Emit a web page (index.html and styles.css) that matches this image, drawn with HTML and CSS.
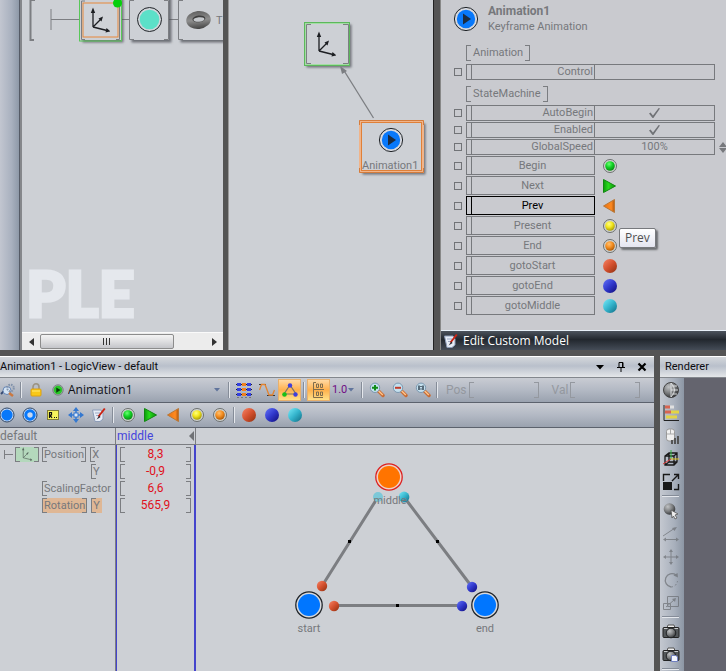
FILE: index.html
```html
<!DOCTYPE html>
<html lang="en">
<head>
<meta charset="utf-8">
<title>Animation1 - LogicView</title>
<link rel="stylesheet" href="styles.css">
</head>
<body>
<svg class="defs" aria-hidden="true">
  <defs>
    <radialGradient id="gGreen" cx=".4" cy=".3" r=".7"><stop offset="0" stop-color="#6bff72"/><stop offset=".5" stop-color="#12d325"/><stop offset="1" stop-color="#0a8a14"/></radialGradient>
    <radialGradient id="gYellow" cx=".4" cy=".3" r=".7"><stop offset="0" stop-color="#ffff80"/><stop offset=".5" stop-color="#f2e61c"/><stop offset="1" stop-color="#a89c0c"/></radialGradient>
    <radialGradient id="gOrange" cx=".4" cy=".3" r=".7"><stop offset="0" stop-color="#ffc070"/><stop offset=".5" stop-color="#f59023"/><stop offset="1" stop-color="#b05c08"/></radialGradient>
    <linearGradient id="gRed" x2="1" y2="1"><stop offset="0.1" stop-color="#f07a5c"/><stop offset=".5" stop-color="#d4502e"/><stop offset="1" stop-color="#8c3010"/></linearGradient>
    <linearGradient id="gBlue" x2="1" y2="1"><stop offset="0.1" stop-color="#5a68f0"/><stop offset=".5" stop-color="#3038cc"/><stop offset="1" stop-color="#100c78"/></linearGradient>
    <linearGradient id="gCyan" x2="1" y2="1"><stop offset="0.1" stop-color="#6ce0f0"/><stop offset=".5" stop-color="#34b4cc"/><stop offset="1" stop-color="#106c84"/></linearGradient>
    <radialGradient id="gGrey" cx=".35" cy=".3" r=".8"><stop offset="0" stop-color="#c0c2c4"/><stop offset=".5" stop-color="#7c7e80"/><stop offset="1" stop-color="#242628"/></radialGradient>
    <linearGradient id="gNext" x2="1"><stop offset="0" stop-color="#0d9a0d"/><stop offset=".4" stop-color="#28dc1c"/><stop offset="1" stop-color="#0a8e0a"/></linearGradient>
    <linearGradient id="gPrev" x2="1"><stop offset="0" stop-color="#e87010"/><stop offset=".7" stop-color="#ff8a20"/><stop offset="1" stop-color="#b05810"/></linearGradient>
    <linearGradient id="gTorus" x2="0" y2="1"><stop offset="0" stop-color="#606060"/><stop offset=".5" stop-color="#8e8e8e"/><stop offset="1" stop-color="#444"/></linearGradient>
    <filter id="shadow" x="-20%" y="-20%" width="150%" height="150%"><feDropShadow dx="2.5" dy="2.5" stdDeviation="1.2" flood-color="#505358" flood-opacity=".75"/></filter>

    <symbol id="ring-green" viewBox="0 0 16 16"><circle cx="8" cy="8" r="6.5" fill="#d0d3d0" stroke="#6c7070"/><circle cx="8" cy="8" r="4.8" fill="url(#gGreen)"/></symbol>
    <symbol id="ring-yellow" viewBox="0 0 16 16"><circle cx="8" cy="8" r="6.5" fill="#d0d3d0" stroke="#6c7070"/><circle cx="8" cy="8" r="4.8" fill="url(#gYellow)"/></symbol>
    <symbol id="ring-orange" viewBox="0 0 16 16"><circle cx="8" cy="8" r="6.5" fill="#d0d3d0" stroke="#6c7070"/><circle cx="8" cy="8" r="4.8" fill="url(#gOrange)"/></symbol>
    <symbol id="ball-red" viewBox="0 0 16 16"><circle cx="8" cy="8" r="7" fill="url(#gRed)"/></symbol>
    <symbol id="ball-blue" viewBox="0 0 16 16"><circle cx="8" cy="8" r="7" fill="url(#gBlue)"/></symbol>
    <symbol id="ball-cyan" viewBox="0 0 16 16"><circle cx="8" cy="8" r="7" fill="url(#gCyan)"/></symbol>
    <symbol id="next" viewBox="0 0 16 16"><path d="M1.5 1.5L13.5 8L1.5 14.5Z" fill="url(#gNext)" stroke="#108810"/></symbol>
    <symbol id="prev" viewBox="0 0 16 16"><path d="M12.5 1.5V14.5L1.5 8Z" fill="url(#gPrev)" stroke="#b87838"/></symbol>
    <symbol id="play-blue" viewBox="0 0 26 26"><circle cx="13" cy="13" r="11.6" fill="#d6d8de" stroke="#202428"/><circle cx="13" cy="13" r="9.2" fill="#0878fa"/><path d="M10 7.5L18 13L10 18.5Z" fill="#1c2c40"/></symbol>
    <symbol id="axes" viewBox="0 0 20 26"><path d="M3 20V4M3 20L11 12M3 20L17 23.5" fill="none" stroke="#1c1e22" stroke-width="1.3"/><path d="M3 0.5L5.2 6H.8ZM13 9.5L11.5 14.5L8.5 11.5ZM20.5 24.5L15.5 25.5L16.5 21Z" fill="#1c1e22"/></symbol>
    <symbol id="edit" viewBox="0 0 16 16"><path d="M1.5 3H10L12 6V12L9 14.5H4Z" fill="#e6ecf6" stroke="#8c9cb8"/><path d="M4 6H9M5 8.5H9" stroke="#9aa8c4"/><path d="M13.8 1.5L7.5 9.5" stroke="#cc2414" stroke-width="2"/><path d="M8.2 8.6L5.6 12.6L9.6 10Z" fill="#2c2830"/></symbol>
    <symbol id="lens" viewBox="0 0 16 16"><path d="M9.5 9L14 13.5" stroke="#c86c34" stroke-width="3.4" stroke-linecap="round"/><path d="M9.5 8.8L13.8 13" stroke="#ffc68c" stroke-width="1.4"/><circle cx="6" cy="5.8" r="4.7" fill="#c4e0ee" stroke="#7c98b0"/></symbol>
    <symbol id="camera" viewBox="0 0 18 16"><path d="M6 1H12L13 4H5Z" fill="#eee" stroke="#555"/><rect x="1" y="3.5" width="16" height="10" rx="1" fill="#53575a" stroke="#222"/><path d="M2 4.5H5.5M12.5 4.5H16" stroke="#c8cacc"/><circle cx="9" cy="9" r="4.8" fill="url(#gGrey)" stroke="#202224"/></symbol>
  </defs>
</svg>

<main class="app">
  <section class="workspace">
    <div class="rail"></div>

    <section class="pane scene" aria-label="Scene">
      <svg class="canvas" width="201" height="300" role="img" aria-label="Scene chain">
        <path d="M13 0H8.500V40H12" fill="none" stroke="#7c7e82" stroke-width="2"/>
        <path d="M29 9V30M29 19.500H170" fill="none" stroke="#7c7e82"/>
        <g filter="url(#shadow)"><rect x="58" y="-6" width="41" height="46" fill="#cdd0d5"/><rect x="107" y="-6" width="40" height="46" fill="#cdd0d5"/><rect x="156" y="-6" width="60" height="46" fill="#cdd0d5"/></g>
        <rect x="57.500" y="-6" width="42" height="47" fill="none" stroke="#58c858"/>
        <path d="M63 1H59.500V39.500H63M94 1H97.500V39.500H94M112 .5H107.500V39.500H112M142 .5H146.500V39.500H142M161 .5H156.500V39.500H161" fill="none" stroke="#7c7e82"/>
        <rect x="61" y="3" width="35" height="34" fill="#cfd2d7" stroke="#e8873a"/>
        <use href="#axes" x="68" y="7" width="20" height="26"/>
        <circle cx="95.500" cy="3" r="4.500" fill="#06ce0c"/>
        <circle cx="127.500" cy="19.500" r="12" fill="#d2d5da" stroke="#202428"/>
        <circle cx="127.500" cy="19.500" r="9.800" fill="#5ce0c8"/>
        <g transform="rotate(-6 176 20)"><ellipse cx="176.500" cy="20" rx="12.300" ry="9" fill="url(#gTorus)"/><ellipse cx="177" cy="19" rx="6.500" ry="3.300" fill="#3e3e3e"/><ellipse cx="177" cy="19.600" rx="5.500" ry="2.300" fill="#c4c7cb"/></g>
        <text class="node-text" x="194" y="24">T</text>
      </svg>
      <div class="watermark">PLE</div>
      <div class="scrollbar">
        <button class="arrow" type="button" aria-label="Scroll left"><svg width="5" height="8"><path d="M5 0V8L0 4Z" fill="#333"/></svg></button>
        <div class="track"><div class="thumb"><i></i><i></i><i></i></div></div>
        <button class="arrow" type="button" aria-label="Scroll right"><svg width="5" height="8"><path d="M0 0V8L5 4Z" fill="#333"/></svg></button>
      </div>
    </section>

    <section class="pane graph" aria-label="Graph">
      <svg class="canvas" width="204" height="300" role="img" aria-label="Node graph">
        <g filter="url(#shadow)"><rect x="75" y="22" width="45" height="43" fill="#cdd0d5"/><rect x="131" y="121" width="63" height="51" fill="#cdd0d5"/></g>
        <rect x="76" y="23" width="44" height="42" fill="none" stroke="#a4dca4" stroke-width="2"/>
        <rect x="75.500" y="22.500" width="45" height="43" fill="none" stroke="#5cb85c"/>
        <path d="M82 24.500H77.500V63.500H82M114 24.500H119.500V63.500H114" fill="none" stroke="#7c7e82"/>
        <use href="#axes" x="87" y="31" width="20" height="26"/>
        <path d="M144.500 118L114 69" stroke="#7c7e82" stroke-width="1.300"/>
        <path d="M111 66L118 71L113 74Z" fill="#7c7e82"/>
        <rect x="131.500" y="121.500" width="62" height="50" fill="none" stroke="#f0b48a" stroke-width="3"/>
        <rect x="132.500" y="122.500" width="60" height="48" fill="none" stroke="#e08038"/>
        <path d="M130.500 125V120.500H194.500V125M130.500 168V172.500H194.500V168" fill="none" stroke="#d47c3c"/>
        <use href="#play-blue" x="149" y="127" width="26" height="26"/>
        <text class="node-text" x="133" y="169">Animation1</text>
      </svg>
    </section>

    <section class="inspector" aria-label="Properties">
      <header class="subject">
        <svg width="26" height="26"><use href="#play-blue"/></svg>
        <div><h1>Animation1</h1><p>Keyframe Animation</p></div>
      </header>
      <h2 class="group"><span class="bracket">Animation</span></h2>
      <div class="row"><input class="pick" type="checkbox" aria-label="Expose Control"><div class="field"><label for="control">Control</label><input class="value" id="control" type="text"></div></div>
      <h2 class="group"><span class="bracket">StateMachine</span></h2>
      <div class="row"><input class="pick" type="checkbox" aria-label="Expose AutoBegin"><div class="field"><label for="auto">AutoBegin</label><span class="value"><input class="tick" id="auto" type="checkbox" checked></span></div></div>
      <div class="row"><input class="pick" type="checkbox" aria-label="Expose Enabled"><div class="field"><label for="enabled">Enabled</label><span class="value"><input class="tick" id="enabled" type="checkbox" checked></span></div></div>
      <div class="row speed"><input class="pick" type="checkbox" aria-label="Expose GlobalSpeed"><div class="field"><label for="speed">GlobalSpeed</label><input class="value" id="speed" type="text" value="100%"></div>
        <svg class="spin" width="8" height="11"><path d="M4 0L8 5H0ZM0 6H8L4 11Z" fill="#77797d"/></svg></div>
      <div class="actions">
        <div class="row"><input class="pick" type="checkbox" aria-label="Expose Begin"><button type="button" class="action">Begin</button><svg width="16" height="16"><use href="#ring-green"/></svg></div>
        <div class="row"><input class="pick" type="checkbox" aria-label="Expose Next"><button type="button" class="action">Next</button><svg width="16" height="16"><use href="#next"/></svg></div>
        <div class="row"><input class="pick" type="checkbox" aria-label="Expose Prev"><button type="button" class="action active">Prev</button><svg width="16" height="16"><use href="#prev"/></svg></div>
        <div class="row"><input class="pick" type="checkbox" aria-label="Expose Present"><button type="button" class="action">Present</button><svg width="16" height="16"><use href="#ring-yellow"/></svg><span class="tooltip" role="tooltip">Prev</span></div>
        <div class="row"><input class="pick" type="checkbox" aria-label="Expose End"><button type="button" class="action">End</button><svg width="16" height="16"><use href="#ring-orange"/></svg></div>
        <div class="row"><input class="pick" type="checkbox" aria-label="Expose gotoStart"><button type="button" class="action">gotoStart</button><svg width="16" height="16"><use href="#ball-red"/></svg></div>
        <div class="row"><input class="pick" type="checkbox" aria-label="Expose gotoEnd"><button type="button" class="action">gotoEnd</button><svg width="16" height="16"><use href="#ball-blue"/></svg></div>
        <div class="row"><input class="pick" type="checkbox" aria-label="Expose gotoMiddle"><button type="button" class="action">gotoMiddle</button><svg width="16" height="16"><use href="#ball-cyan"/></svg></div>
      </div>
      <button class="custom" type="button"><svg width="16" height="16"><use href="#edit"/></svg>Edit Custom Model</button>
    </section>
  </section>

  <section class="lower">
    <section class="logic" aria-label="LogicView">
      <header class="title"><h2>Animation1 - LogicView - default</h2>
        <button type="button" aria-label="Window menu"><svg width="10" height="10"><path d="M1 3H9L5 7.500Z"/></svg></button>
        <button type="button" aria-label="Pin"><svg width="10" height="10"><path d="M3 .5H7V5.500H3ZM1 5.500H9M5 6V10M6.500 1V5" fill="none" stroke="#000"/></svg></button>
        <button type="button" aria-label="Close"><svg width="10" height="10"><path d="M1.500 1.500L8.500 8.500M8.500 1.500L1.500 8.500" stroke="#000" stroke-width="2.200"/></svg></button>
      </header>

      <div class="toolbar">
        <button type="button" class="tool" aria-label="Settings"><svg width="16" height="16"><path d="M2 12L7 7" stroke="#384c74" stroke-width="2"/><circle cx="8" cy="8.500" r="4" fill="#d4e4f4" stroke="#6484b4"/><circle cx="11.500" cy="6" r="3.300" fill="none" stroke="#8494ac" stroke-width="2" stroke-dasharray="1.600 1"/><path d="M10 11L14 14" stroke="#ca7840" stroke-width="2.400"/></svg></button>
        <i class="sep"></i>
        <button type="button" class="tool" aria-label="Lock"><svg width="16" height="16"><path d="M5 8V5a3 3.300 0 0 1 6 0V8" fill="none" stroke="#9c9484" stroke-width="1.600"/><rect x="3" y="7" width="10" height="7" rx="1" fill="#f8c818" stroke="#dca010"/><path d="M4 9H12" stroke="#ffea70"/></svg></button>
        <label class="machine"><svg width="14" height="14" viewBox="0 0 16 16"><circle cx="8" cy="8" r="6" fill="#9ca4a4" stroke="#788080"/><circle cx="8" cy="8" r="4.800" fill="#28c828"/><path d="M6 5L11 8L6 11Z" fill="#063c06"/></svg>
          <select aria-label="State machine"><option>Animation1</option></select><svg width="6" height="4"><path d="M0 0H6L3 3.500Z" fill="#60749c"/></svg></label>
        <i class="sep"></i>
        <button type="button" class="tool" aria-label="Keys"><svg width="16" height="16"><path d="M0 2.500H16M0 7.500H16M0 12.500H16" stroke="#222"/><path d="M1 1H5V4H1ZM1 6H5V9H1ZM1 11H5V14H1ZM11 1H15V4H11ZM11 6H15V9H11ZM11 11H15V14H11Z" fill="#3440e0"/><path d="M6 1H10V4H6ZM6 6H10V9H6ZM6 11H10V14H6Z" fill="#f08020"/><path d="M1 15.500H15" stroke="#777" stroke-dasharray="2 2"/></svg></button>
        <button type="button" class="tool" aria-label="Curves"><svg width="16" height="16"><path d="M0 2.500H7M8 13.500H16" stroke="#333"/><path d="M.5 8L2.500 2.500H6L10 13H13.500L15.500 8" fill="none" stroke="#e48430" stroke-width="1.300"/></svg></button>
        <button type="button" class="tool on" aria-label="States"><svg width="16" height="16"><path d="M8 3L2 12H14Z" fill="none" stroke="#7c7464" stroke-width="1.200"/><circle cx="8" cy="3.500" r="2.200" fill="#4040dc"/><circle cx="2.500" cy="12.500" r="2.300" fill="#18c018"/><circle cx="13.500" cy="12.500" r="2.200" fill="#4040dc"/></svg></button>
        <i class="sep"></i>
        <button type="button" class="tool on" aria-label="Values"><svg width="16" height="16"><path d="M5 .5H2.500V15.500H12M2.500 7.500H13" fill="none" stroke="#806c4c"/><path d="M5.500 2H7.500V5.500H5.500ZM9.500 2H11.500V5.500H9.500ZM5.500 10H7.500V13.500H5.500ZM9.500 10H11.500V13.500H9.500Z" fill="none" stroke="#806c4c"/></svg></button>
        <label class="rate"><select aria-label="Playback rate"><option>1.0</option></select><svg width="6" height="4"><path d="M0 0H6L3 3.500Z" fill="#60749c"/></svg></label>
        <i class="sep"></i>
        <button type="button" class="tool" aria-label="Zoom in"><svg width="16" height="16"><use href="#lens"/><path d="M3 5.800H9M6 3V8.600" stroke="#108c18" stroke-width="2"/></svg></button>
        <button type="button" class="tool" aria-label="Zoom out"><svg width="16" height="16"><use href="#lens"/><path d="M3 5.800H9" stroke="#c03c2c" stroke-width="2"/></svg></button>
        <button type="button" class="tool" aria-label="Actual size"><svg width="16" height="16"><use href="#lens"/><path d="M4 3.500V8M8 3.500V8M6 4V5M6 6.500V7.500" stroke="#203040" stroke-width="1.300"/></svg></button>
        <i class="sep"></i>
        <div class="coord"><label for="pos">Pos</label><span class="bracket"><input id="pos" type="text" disabled></span></div>
        <div class="coord"><label for="val">Val</label><span class="bracket"><input id="val" type="text" disabled></span></div>
      </div>

      <div class="toolbar">
        <button type="button" class="tool" aria-label="Add state"><svg width="16" height="16"><circle cx="8" cy="8" r="7" fill="#c8d8f0" stroke="#304868"/><circle cx="8" cy="8" r="5.600" fill="#0878fa"/></svg></button>
        <button type="button" class="tool" aria-label="Add loop state"><svg width="16" height="16"><circle cx="8" cy="8" r="7" fill="#c8d8f0" stroke="#304868"/><circle cx="8" cy="8" r="4.200" fill="none" stroke="#0878fa" stroke-width="3"/></svg></button>
        <button type="button" class="tool" aria-label="Rename"><svg width="16" height="16"><rect x="2.500" y="3.500" width="11" height="9" fill="#f6f45c" stroke="#807c38"/><path d="M4.500 11V5.500H6.500V8H4.500M5 8L7 11M9 10.500H10M11 10.500H12" fill="none" stroke="#111" stroke-width="1.200"/></svg></button>
        <button type="button" class="tool" aria-label="Move"><svg width="16" height="16"><path d="M8 0L11 4H5ZM8 16L11 12H5ZM0 8L4 5V11ZM16 8L12 5V11Z" fill="#3478d0"/><path d="M8 3V13M3 8H13" stroke="#3478d0" stroke-width="1.500"/><rect x="6" y="6" width="4" height="4" fill="#dce8f8" stroke="#3478d0"/></svg></button>
        <button type="button" class="tool" aria-label="Edit"><svg width="16" height="16"><use href="#edit"/></svg></button>
        <i class="sep"></i>
        <button type="button" class="tool" aria-label="Begin"><svg width="16" height="16"><use href="#ring-green"/></svg></button>
        <button type="button" class="tool" aria-label="Next"><svg width="16" height="16"><use href="#next"/></svg></button>
        <button type="button" class="tool" aria-label="Prev"><svg width="16" height="16"><use href="#prev"/></svg></button>
        <button type="button" class="tool" aria-label="Present"><svg width="16" height="16"><use href="#ring-yellow"/></svg></button>
        <button type="button" class="tool" aria-label="End"><svg width="16" height="16"><use href="#ring-orange"/></svg></button>
        <i class="sep"></i>
        <button type="button" class="tool" aria-label="gotoStart"><svg width="16" height="16"><use href="#ball-red"/></svg></button>
        <button type="button" class="tool" aria-label="gotoEnd"><svg width="16" height="16"><use href="#ball-blue"/></svg></button>
        <button type="button" class="tool" aria-label="gotoMiddle"><svg width="16" height="16"><use href="#ball-cyan"/></svg></button>
      </div>

      <div class="states">
        <table class="keys">
          <thead><tr><th scope="col">default</th><th scope="col" class="current"><div>middle<svg width="5" height="10"><path d="M5 0V10L0 5Z" fill="#707276"/></svg></div></th></tr></thead>
          <tbody>
            <tr><th scope="row"><div class="param"><span class="tree"><svg width="9" height="9"><path d="M.5 0V9M0 4.500H9" stroke="#7c7e82"/></svg><span class="bracket target"><svg width="14" height="14" viewBox="0 0 20 26"><use href="#axes" opacity=".6"/></svg></span></span><span class="bracket name">Position</span><span class="bracket open">X</span></div></th><td><div class="bracket">8,3</div></td></tr>
            <tr><th scope="row"><div class="param second"><span class="bracket open">Y</span></div></th><td><div class="bracket">-0,9</div></td></tr>
            <tr><th scope="row"><div class="param"><span class="tree"></span><span class="bracket open">ScalingFactor</span></div></th><td><div class="bracket">6,6</div></td></tr>
            <tr><th scope="row"><div class="param"><span class="tree"></span><span class="bracket name hot">Rotation</span><span class="bracket open hot">Y</span></div></th><td><div class="bracket">565,9</div></td></tr>
            <tr class="fill"><th></th><td></td></tr>
          </tbody>
        </table>
        <div class="machine-view">
          <div class="ruler"></div>
          <svg class="diagram" width="457" height="226" role="img" aria-label="State transitions">
            <path d="M126 141L182 52M208 52L276 142M138 160.500H266" fill="none" stroke="#7c7e82" stroke-width="3"/>
            <path d="M152 95h3v3h-3zM240 95h3v3h-3zM200 159h3v3h-3z"/>
            <circle cx="193" cy="32" r="13.200" fill="#eed0c8" stroke="#dc2020" stroke-width="1.300"/><circle cx="193" cy="32" r="11" fill="#ff7400"/>
            <circle cx="113" cy="160" r="13.200" fill="#d6d9de" stroke="#202428" stroke-width="1.300"/><circle cx="113" cy="160" r="11" fill="#0076ff"/>
            <circle cx="289" cy="160" r="13.200" fill="#d6d9de" stroke="#202428" stroke-width="1.300"/><circle cx="289" cy="160" r="11" fill="#0076ff"/>
            <circle cx="182" cy="52" r="5" fill="#7cc8d8"/><circle cx="208" cy="52" r="5.400" fill="url(#gCyan)"/>
            <circle cx="126" cy="141" r="5.200" fill="url(#gRed)"/><circle cx="138" cy="161" r="5.200" fill="url(#gRed)"/>
            <circle cx="276" cy="142" r="5.200" fill="url(#gBlue)"/><circle cx="266" cy="161" r="5.200" fill="url(#gBlue)"/>
            <g class="node-text" text-anchor="middle"><text x="194" y="59">middle</text><text x="113" y="187">start</text><text x="289" y="187">end</text></g>
          </svg>
        </div>
      </div>
    </section>

    <section class="renderer" aria-label="Renderer">
      <header class="title"><h2>Renderer</h2></header>
      <div class="view">
        <div class="side">
          <button type="button" aria-label="World"><svg width="18" height="18"><circle cx="9" cy="9" r="7.500" fill="url(#gGrey)" stroke="#444"/><path d="M9 2V16M9 9H16M10 5H15M10 13H15M9 2Q16 9 9 16" fill="none" stroke="#e4e6e8" stroke-width=".9"/></svg></button>
          <button type="button" aria-label="Statistics"><svg width="18" height="18"><path d="M2 1V16.500H17" fill="none" stroke="#222"/><path d="M3 3H8M3 8H9" stroke="#d86450" stroke-width="3"/><path d="M8 3H12" stroke="#e0e0e0" stroke-width="3"/><path d="M9 8H17M4 13H15" stroke="#e4d444" stroke-width="3"/></svg></button>
          <button type="button" aria-label="Mouse"><svg width="18" height="18"><rect x="4.500" y="2" width="8" height="12" rx="2.500" fill="#f0f0f0" stroke="#999"/><path d="M5 7H12M8.500 2V7" stroke="#aaa"/><path d="M9 13H11V17H9ZM12 11H14V17H12ZM15 9H17V17H15Z" fill="#555"/></svg></button>
          <button type="button" aria-label="Bounds"><svg width="18" height="18"><path d="M3 6L7 3H15V12L12 15H3ZM3 6H12V15M12 6L15 3M7 3V12L3 15M7 12H15" fill="none" stroke="#181818" stroke-width="1.300"/><path d="M9 9V0" stroke="#30b840"/><path d="M9 9L1 14" stroke="#e03838"/><path d="M9 9H17" stroke="#e4c820"/></svg></button>
          <button type="button" aria-label="Resize view"><svg width="18" height="18"><path d="M1.500 8V1.500H8M16.500 11V16.500H12M12 1.500H16.500V6M10 8L16 2" fill="none" stroke="#181818" stroke-width="1.400"/><rect x="1" y="9" width="9" height="8" fill="#181818"/></svg></button>
          <i></i>
          <button type="button" aria-label="Pick"><svg width="18" height="18"><circle cx="7.500" cy="7" r="5.800" fill="url(#gGrey)"/><path d="M9 8L16 12L13 13L15 16L13 17L11.500 14L10 16Z" fill="#eee" stroke="#555" stroke-width=".8"/></svg></button>
          <button type="button" class="off" aria-label="Select axis"><svg width="18" height="18"><path d="M1 11L13 3M2 14.500H16" stroke="#66696d"/><path d="M15 2L12.500 6L10 3ZM17 14.500L14 12.500V16.500ZM1 14.500L4 12.500V16.500Z" fill="#66696d"/></svg></button>
          <button type="button" class="off" aria-label="Translate"><svg width="18" height="18"><path d="M9 3V15M3 9H15" stroke="#66696d"/><path d="M9 1L11 4H7ZM9 17L11 14H7ZM1 9L4 7V11ZM17 9L14 7V11Z" fill="#66696d"/></svg></button>
          <button type="button" class="off" aria-label="Rotate"><svg width="18" height="18"><path d="M14 4A6.700 6.700 0 1 0 9 16" fill="none" stroke="#66696d" stroke-width="1.300"/><path d="M9 16A6.700 6.700 0 0 0 15.500 10" fill="none" stroke="#66696d" stroke-dasharray="2 2"/><path d="M16 6.500L15.500 2L11.500 4.500Z" fill="#66696d"/></svg></button>
          <button type="button" class="off" aria-label="Scale"><svg width="18" height="18"><path d="M5.500 2.500H16.500V12.500H5.500ZM1.500 9.500H8.500V15.500H1.500ZM4 13L12 6" fill="none" stroke="#66696d"/><path d="M14 4L13 8L10 5Z" fill="#66696d"/></svg></button>
          <i></i>
          <button type="button" aria-label="Snapshot"><svg width="18" height="16"><use href="#camera"/></svg></button>
          <button type="button" aria-label="Copy snapshot"><svg width="18" height="16"><use href="#camera"/><path d="M9.500 8.500H14L15.500 10V14.500H9.500Z" fill="#f4f6ff" stroke="#7080c0"/></svg></button>
          <i></i>
        </div>
      </div>
    </section>
  </section>
</main>
</body>
</html>
```

FILE: styles.css
```css
* { box-sizing: border-box; }

body {
  margin: 0;
  background: #545454;
  color: #76787c;
  font: 11px/16px Roboto, "Liberation Sans", Arial, sans-serif;
}

h1, h2, p { margin: 0; font-size: inherit; font-weight: normal; }
svg { display: block; flex: none; }
button, input, select { margin: 0; padding: 0; border: 0; background: none; color: inherit; font: inherit; }
.defs { position: absolute; width: 0; height: 0; }
.node-text { font-size: 11px; fill: #76787c; }

.app { display: grid; grid-template-rows: auto 1fr; gap: 6px; min-height: 100vh; }

/* Upper workspace */
.workspace {
  display: grid;
  grid-template-columns: 20px minmax(0, 203fr) minmax(0, 211fr) minmax(0, 292fr);
  background: #545454;
}
.rail { background: linear-gradient(90deg, #c2c6d0, #a9b1bf 60%, #8e99a8); border-right: 1px solid #555b66; }
.pane { display: flex; flex-direction: column; min-width: 0; overflow: hidden; background: #cdd0d5; }
.scene { position: relative; border-left: 2px solid #85878b; }
.canvas { position: absolute; top: 0; left: 0; }
.graph { position: relative; margin-left: 5px; border-left: 1px solid #999; border-right: 1px solid #222; }
.watermark {
  margin-top: auto;
  padding-left: 4px;
  color: #e5e8ed;
  font: 900 63px/78px Lato, sans-serif;
  -webkit-text-stroke: 3px #e5e8ed;
}
.scrollbar { display: flex; height: 18px; background: #ececec; border-top: 1px solid #fafafa; }
.arrow { display: grid; place-items: center; width: 18px; }
.track { flex: 1; }
.thumb {
  display: flex; justify-content: center; align-items: center; gap: 2px;
  width: 81%; height: 15px; margin-top: 1px;
  border: 1px solid #8c8c8c; border-radius: 2px;
  background: linear-gradient(#f4f4f4, #dedee0 50%, #c4c5c9);
}
.thumb i { width: 1px; height: 7px; background: #333; }

/* Inspector */
.inspector { display: flex; flex-direction: column; margin-left: 6px; border-left: 1px solid #888; background: #c9cacf; }
.subject { display: flex; align-items: center; gap: 9px; padding: 3px 0 5px 12px; }
.subject h1 { font-size: 12px; font-weight: bold; }
.bracket {
  --line: #7b7d81;
  background:
    linear-gradient(var(--line) 0 0) 0 0 / 5px 1px,
    linear-gradient(var(--line) 0 0) 0 100% / 5px 1px,
    linear-gradient(var(--line) 0 0) 100% 0 / 5px 1px,
    linear-gradient(var(--line) 0 0) 100% 100% / 5px 1px,
    linear-gradient(var(--line) 0 0) 0 0 / 1px 100%,
    linear-gradient(var(--line) 0 0) 100% 0 / 1px 100%;
  background-repeat: no-repeat;
}
.group { display: flex; padding: 5px 0 3px 25px; }
.group .bracket { padding: 0 7px; height: 16px; }
.row { position: relative; display: flex; align-items: center; gap: 4px; padding: 0 11px 0 13px; margin-bottom: 1px; }
.pick { appearance: none; flex: none; width: 8px; height: 8px; border: 1px solid #717377; }
.field { display: flex; flex: 1; min-width: 0; height: 16px; border: 1px solid #77797d; }
.field label { flex: 0 0 124px; margin-left: 4px; padding-right: 1px; border-left: 1px solid #77797d; border-right: 1px solid #77797d; text-align: right; line-height: 14px; }
.value { display: grid; place-items: center; flex: 1; min-width: 0; text-align: center; line-height: 14px; }
.tick { appearance: none; width: 11px; height: 10px; background: #717377; clip-path: polygon(0 55%, 14% 45%, 36% 75%, 88% 0, 100% 5%, 40% 100%, 32% 100%); }
.speed { padding-right: 0; }
.spin { margin-right: -1px; }
.actions .row { height: 19px; }
.action { width: 129px; height: 19px; border: 1px solid #77797d; background: linear-gradient(90deg, transparent 4px, #77797d 4px 5px, transparent 5px); padding-left: 4px; line-height: 16px; }
.action.active { color: #000; border-color: #000; background: linear-gradient(90deg, transparent 4px, #000 4px 5px, transparent 5px); }
.action + svg { margin-left: 3px; }
.tooltip {
  position: absolute; left: 178px; top: 12px; z-index: 1;
  padding: 0 5px; border: 1px solid #77797d; border-radius: 2px;
  background: linear-gradient(#fff, #e4e5f0); color: #505050;
  font: 12px/18px "Open Sans", sans-serif;
  box-shadow: 2px 2px 2px #6c6e72;
}
.custom {
  display: flex; align-items: center; gap: 4px; height: 20px; margin-top: 14px; padding-left: 2px;
  border-top: 1px solid #e8f0f8; background: linear-gradient(#4c535d, #22272e 45%, #444c57);
  color: #fff; font: 12px/18px "Open Sans", sans-serif; text-align: left;
}

/* Lower windows */
.lower { display: grid; grid-template-columns: minmax(0, 654fr) minmax(0, 66fr); gap: 6px; }
.logic, .renderer { display: flex; flex-direction: column; min-width: 0; overflow: hidden; background: #cdd0d5; border-top: 1px solid #fff; }
.title {
  display: flex; align-items: center; gap: 10px; height: 21px; padding-right: 6px;
  background: linear-gradient(#d4d7db, #b9c0cb 45%, #e4e6e9);
  border-bottom: 1px solid #83878d; color: #0c0c10;
}
.title h2 { flex: 1; white-space: nowrap; }
.title button { width: 11px; }
.toolbar {
  display: flex; align-items: center; height: 25px; padding-left: 18px; margin-left: -23px;
  background: linear-gradient(#c9ccd3, #b3b9c4 50%, #9aa2af); border-bottom: 1px solid #5c626d;
  overflow: hidden;
}
.tool { display: grid; place-items: center; flex: none; width: 23px; height: 22px; }
.tool.on { border: 1px solid #e8b06c; background: linear-gradient(#ffd9a4, #ffb04c 50%, #ffe088); }
.sep { flex: none; width: 2px; height: 16px; margin: 0 2px; border-left: 1px solid #858c98; border-right: 1px solid #e4e7ec; }
.toolbar select { appearance: none; flex: 1; min-width: 0; }
.machine { display: flex; align-items: center; gap: 3px; flex: none; width: 179px; padding: 0 6px 0 4px; color: #101014; font: 12px/18px "Open Sans", sans-serif; }
.rate { display: flex; align-items: center; flex: none; width: 29px; padding: 0 5px 0 2px; color: #700c84; }
.coord { display: flex; align-items: center; gap: 2px; padding-left: 6px; margin-right: 7px; color: #94989f; min-width: 0; font-size: 12px; }
.coord .bracket { --line: #94989f; display: block; flex: 0 1 70px; min-width: 0; height: 16px; }
.coord input { width: 100%; height: 16px; }

.states { display: flex; flex: 1; }
.keys { width: 196px; table-layout: fixed; border-collapse: separate; border-spacing: 0; }
.keys th, .keys td { padding: 0; height: 17px; font-weight: normal; text-align: left; vertical-align: top; }
.keys th:first-child { width: 116px; border-right: 1px solid #7b7d81; }
.keys thead th { border-bottom: 1px solid #7b7d81; font-size: 12px; }
.keys .current { color: #4444dc; border-right: 1px solid #7b7d81; }
.current div { display: flex; align-items: center; justify-content: space-between; padding: 0 1px; }
.keys td { border: 0 solid #4444cc; border-width: 0 2px 0 1px; padding: 0 3px; color: #e01020; text-align: center; font-size: 12px; }
.keys td .bracket { height: 15px; margin-top: 2px; line-height: 15px; }
.keys .fill th, .keys .fill td { height: auto; }
.keys .fill td { border-bottom-width: 1px; }
.param { display: flex; gap: 4px; padding: 2px 1px 0 0; line-height: 15px; overflow: hidden; }
.param .bracket { padding: 0 2px; height: 15px; }
.param .open { background-size: 5px 1px, 5px 1px, 0 0, 0 0, 1px 100%, 0 0; }
.param .name { flex: none; }
.param .hot { background-color: #dfb795; }
.param.second { padding-left: 91px; }
.tree { display: flex; align-items: center; gap: 2px; flex: none; width: 38px; padding-left: 4px; }
.param .target { padding: 0 5px; background-color: #b4d8bc; }

.machine-view { flex: 1; min-width: 0; overflow: hidden; }
.ruler { height: 17px; border-bottom: 1px solid #85878b; }

.renderer .title { padding-left: 5px; }
.view { flex: 1; background: #64646e; }
.side { display: flex; flex-direction: column; width: 24px; height: 100%; padding-right: 3px; background: linear-gradient(90deg, #c4c8d0, #a8b0bc 60%, #8c96a4); }
.side button { display: grid; place-items: center; height: 23px; flex: none; }
.side i { flex: none; height: 2px; margin: 2px; border-top: 1px solid #858c98; border-bottom: 1px solid #e4e7ec; }
.off { opacity: .65; }
```
